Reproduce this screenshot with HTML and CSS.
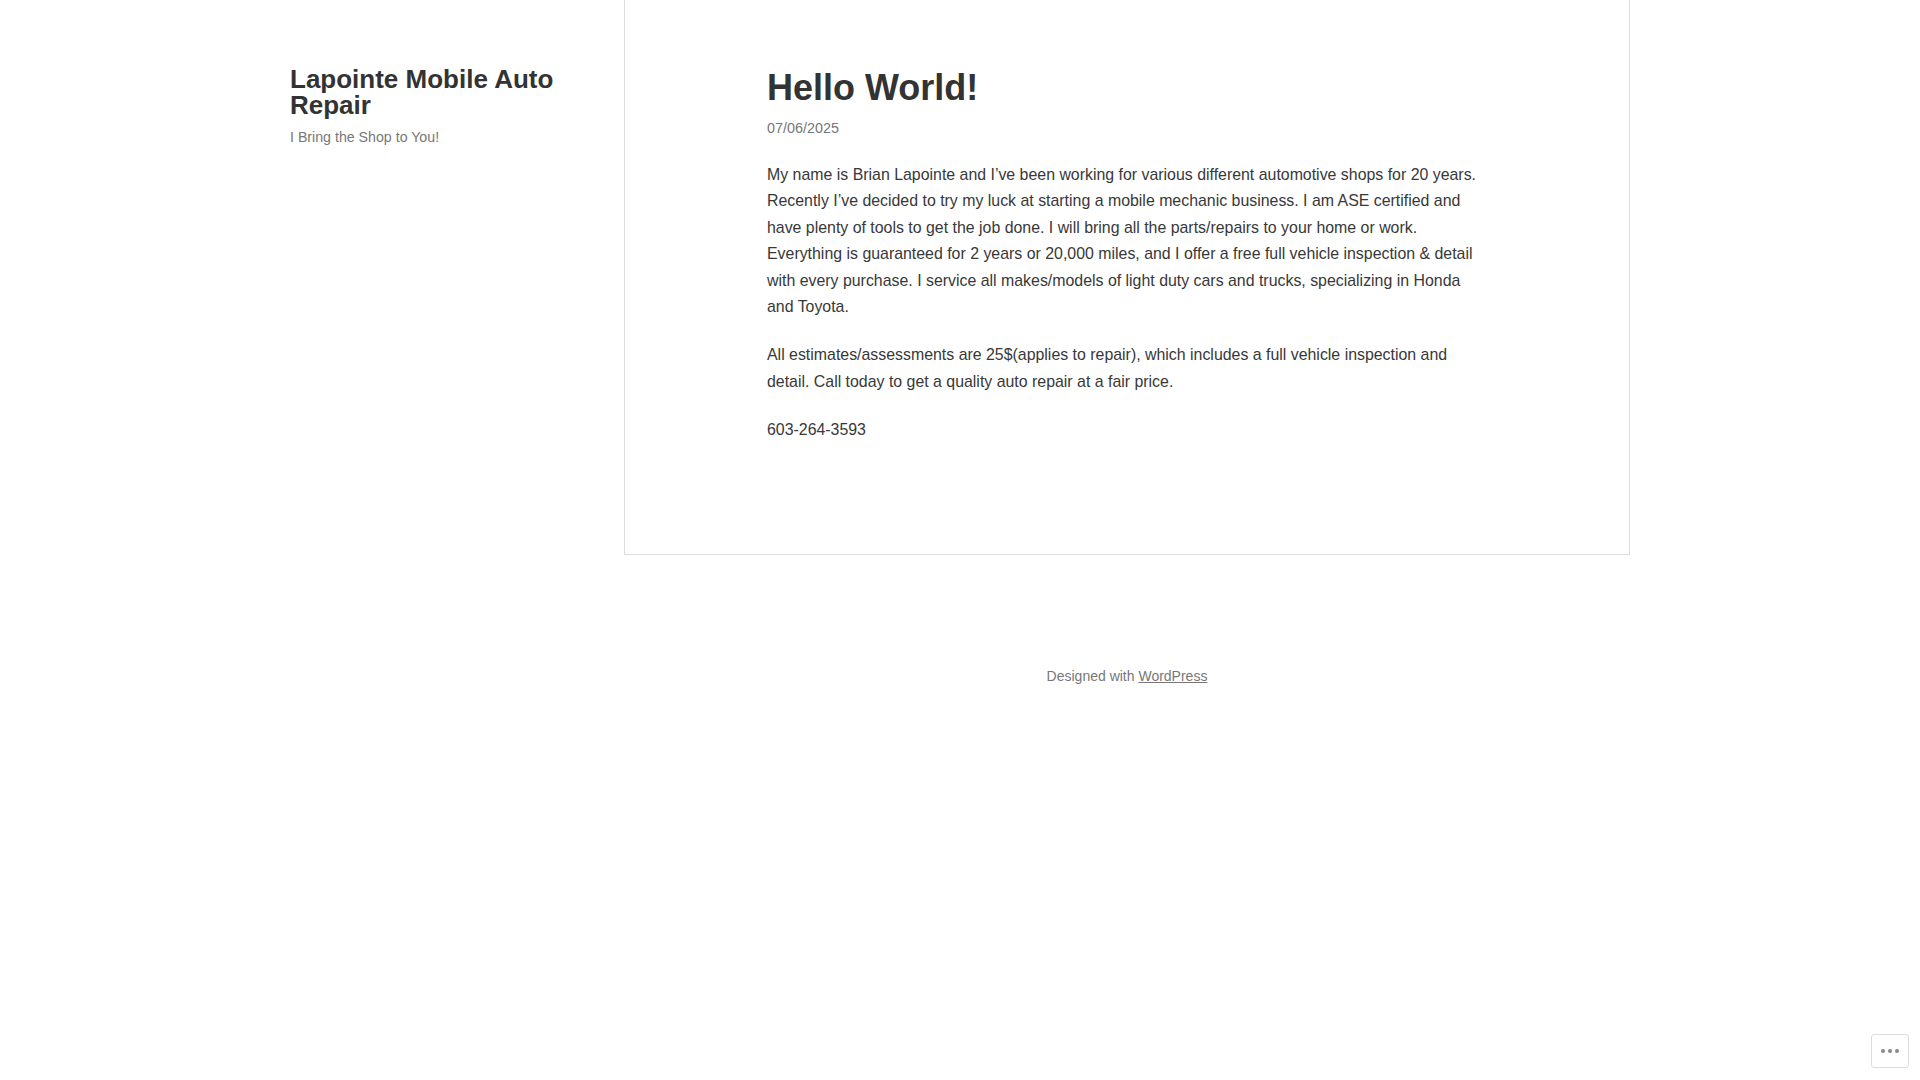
FILE: index.html
```html
<!DOCTYPE html>
<html lang="en">
<head>
<meta charset="utf-8">
<title>Lapointe Mobile Auto Repair</title>
<link rel="stylesheet" href="styles.css">
</head>
<body>
<div class="page">
  <div class="layout">
    <header class="sidebar">
      <h1 class="site-title">Lapointe Mobile Auto Repair</h1>
      <p class="site-tagline">I Bring the Shop to You!</p>
    </header>
    <main class="content">
      <article class="post">
        <h2 class="post-title">Hello World!</h2>
        <div class="post-date">07/06/2025</div>
        <div class="post-body">
          <p>My name is Brian Lapointe and I’ve been working for various different automotive shops for 20 years. Recently I’ve decided to try my luck at starting a mobile mechanic business. I am ASE certified and have plenty of tools to get the job done. I will bring all the parts/repairs to your home or work. Everything is guaranteed for 2 years or 20,000 miles, and I offer a free full vehicle inspection &amp; detail with every purchase. I service all makes/models of light duty cars and trucks, specializing in Honda and Toyota.</p>
          <p>All estimates/assessments are 25$(applies to repair), which includes a full vehicle inspection and detail. Call today to get a quality auto repair at a fair price.</p>
          <p>603-264-3593</p>
        </div>
      </article>
    </main>
  </div>
  <footer class="footer">
    <span>Designed with <a href="#">WordPress</a></span>
  </footer>
</div>
<button class="actionbar" aria-label="More">
  <span class="dot"></span><span class="dot"></span><span class="dot"></span>
</button>
</body>
</html>
```

FILE: styles.css
```css
html, body {
  margin: 0;
  padding: 0;
  background: #ffffff;
}

body {
  font-family: "Liberation Sans", Arial, sans-serif;
  color: #333333;
}

.page {
  width: 1340px;
  margin: 0 auto;
}

.layout {
  display: flex;
  align-items: flex-start;
}

.sidebar {
  width: 334px;
  flex: 0 0 334px;
  box-sizing: border-box;
  padding: 66px 40px 0 0;
}

.site-title {
  margin: 0;
  font-size: 26px;
  line-height: 26px;
  font-weight: 700;
  color: #333333;
}

.site-tagline {
  margin: 9px 0 0;
  font-size: 14.2px;
  line-height: 21px;
  color: #777777;
}

.content {
  width: 1006px;
  flex: 0 0 1006px;
  box-sizing: border-box;
  border: 1px solid #dddddd;
  border-top: none;
  padding: 66px 142px 110px 142px;
}

.post-title {
  margin: 0;
  font-size: 36px;
  line-height: 43px;
  font-weight: 700;
  color: #333333;
}

.post-date {
  margin-top: 9px;
  font-size: 14.4px;
  line-height: 21px;
  color: #777777;
}

.post-body {
  margin-top: 23px;
  font-size: 15.9px;
  line-height: 26.4px;
  color: #383838;
}

.post-body p {
  margin: 0 0 22px;
}

.post-body p:last-child {
  margin-bottom: 0;
}

.footer {
  margin-left: 334px;
  width: 1006px;
  padding-top: 111px;
  text-align: center;
  font-size: 14px;
  line-height: 21px;
  color: #777777;
}

.footer a {
  color: #777777;
  text-decoration: underline;
}

.actionbar {
  position: fixed;
  right: 11px;
  bottom: 12px;
  width: 38px;
  height: 34px;
  box-sizing: border-box;
  border: 1px solid #dcdcde;
  border-radius: 3px;
  background: #ffffff;
  padding: 0;
  display: flex;
  align-items: center;
  justify-content: center;
  gap: 3px;
}

.dot {
  width: 4px;
  height: 4px;
  border-radius: 50%;
  background: #888888;
}
```
